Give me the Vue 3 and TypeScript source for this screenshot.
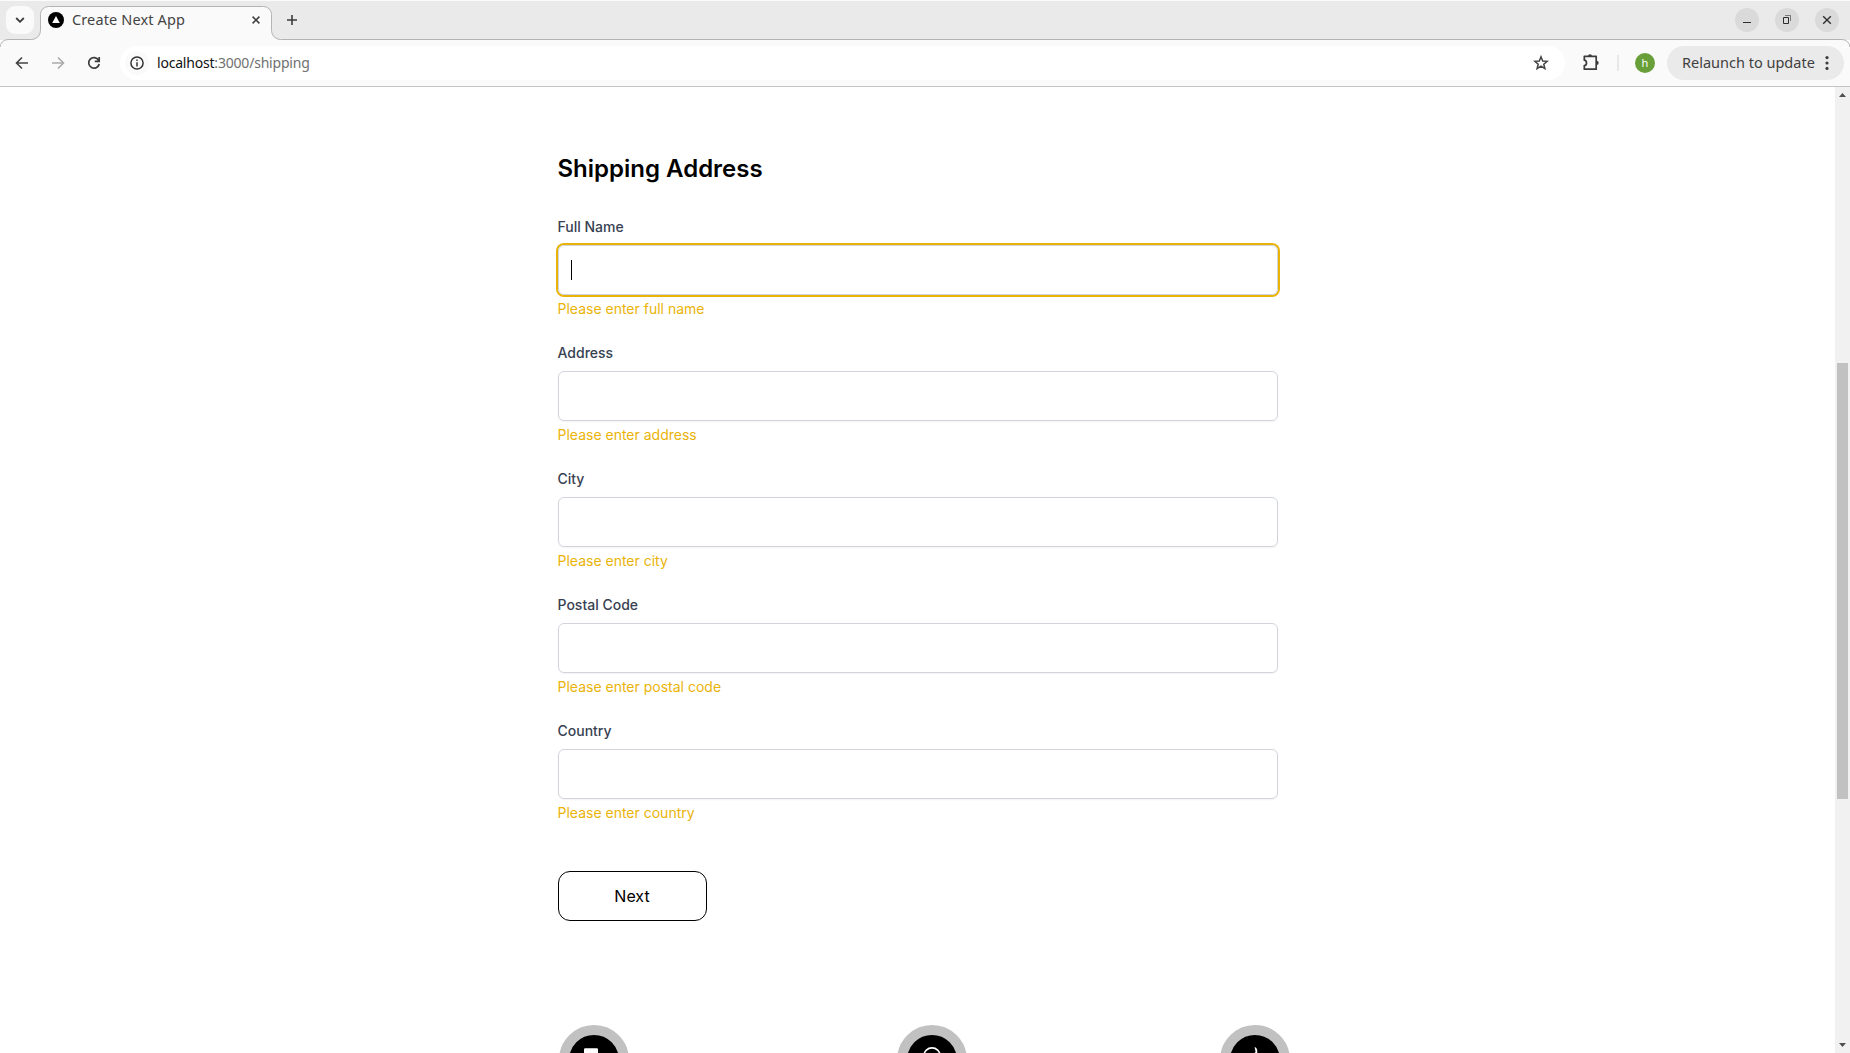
<script setup lang="ts">
interface Field {
  id: string
  label: string
  error: string
  focused?: boolean
}

const fields: Field[] = [
  { id: 'fullName', label: 'Full Name', error: 'Please enter full name', focused: true },
  { id: 'address', label: 'Address', error: 'Please enter address' },
  { id: 'city', label: 'City', error: 'Please enter city' },
  { id: 'postalCode', label: 'Postal Code', error: 'Please enter postal code' },
  { id: 'country', label: 'Country', error: 'Please enter country' },
]
</script>

<template>
  <div class="window">
    <header class="tabstrip">
      <svg class="tab-shape" width="1850" height="47" viewBox="0 0 1850 47">
        <path
          d="M0 47.5A8 8 0 0 1 8 39.5H31.5A9 9 0 0 0 40.5 30.5V14.5A8 8 0 0 1 48.5 6.5H263.5A8 8 0 0 1 271.5 14.5V30.5A9 9 0 0 0 280.5 39.5H1842A8 8 0 0 1 1850 47.5Z"
          fill="#fafafa"
        />
        <path
          d="M0 47.5A8 8 0 0 1 8 39.5H31.5A9 9 0 0 0 40.5 30.5V14.5A8 8 0 0 1 48.5 6.5H263.5A8 8 0 0 1 271.5 14.5V30.5A9 9 0 0 0 280.5 39.5H1842A8 8 0 0 1 1850 47.5"
          fill="none"
          stroke="#b4b4b4"
        />
      </svg>
      <button class="tab-search" aria-label="Search tabs">
        <svg width="10" height="6" viewBox="0 0 10 6"><path d="M1.2 1L5 4.8L8.8 1" fill="none" stroke="#3c3c3c" stroke-width="1.8" /></svg>
      </button>
      <div class="tab">
        <svg width="16" height="16" viewBox="0 0 16 16"><circle cx="8" cy="8" r="8" /><path d="M8 4L11.8 11H4.2Z" fill="#fff" /></svg>
        <span class="tab-title">Create Next App</span>
        <svg class="tab-close" width="8" height="8" viewBox="0 0 8 8"><path d="M.6 .6L7.4 7.4M7.4 .6L.6 7.4" stroke="#3c3c3c" stroke-width="1.5" /></svg>
      </div>
      <svg class="new-tab" width="10" height="10" viewBox="0 0 10 10"><path d="M5 0V10M0 5H10" stroke="#3c3c3c" stroke-width="1.6" /></svg>
      <div class="window-buttons">
        <span><svg width="24" height="24" viewBox="0 0 24 24"><path d="M8 14.5H16" stroke="#2e2e2e" /></svg></span>
        <span><svg width="24" height="24" viewBox="0 0 24 24" fill="none"><path d="M8.5 9.5H13.5V15.5H8.5Z" stroke="#2e2e2e" /><path d="M10 7.5H15.5V13" stroke="#2e2e2e" stroke-opacity=".55" /></svg></span>
        <span><svg width="24" height="24" viewBox="0 0 24 24"><path d="M8.2 8.2L15.8 15.8M15.8 8.2L8.2 15.8" stroke="#2e2e2e" stroke-width="1.4" /></svg></span>
      </div>
    </header>

    <nav class="toolbar">
      <svg class="nav-icon" width="16" height="16" viewBox="0 0 16 16"><path d="M14 8H3M8 2.5L2.5 8L8 13.5" fill="none" stroke="#444" stroke-width="1.6" /></svg>
      <svg class="nav-icon" width="16" height="16" viewBox="0 0 16 16"><path d="M2 8H13M8 2.5L13.5 8L8 13.5" fill="none" stroke="#aaa" stroke-width="1.6" /></svg>
      <svg class="nav-icon" width="16" height="16" viewBox="0 0 16 16"><path d="M12.6 5.2A5.3 5.3 0 1 0 13.2 9M13.2 2V6.3H8.8" fill="none" stroke="#3c3c3c" stroke-width="1.7" /></svg>
      <div class="omnibox">
        <span class="site-info">
          <svg width="14" height="14" viewBox="0 0 14 14"><circle cx="7" cy="7" r="6.1" fill="none" stroke="#333" stroke-width="1.5" /><path d="M7 6.2V10.4M7 3.6V5.1" stroke="#333" stroke-width="1.5" /></svg>
        </span>
        <span class="url"><b>localhost</b>:3000/shipping</span>
        <svg class="star" width="16" height="16" viewBox="0 0 16 16"><path d="M8 1.8L9.7 6L14.2 6.3L10.8 9.2L11.9 13.7L8 11.2L4.1 13.7L5.2 9.2L1.8 6.3L6.3 6Z" fill="none" stroke="#444" stroke-width="1.5" /></svg>
      </div>
      <svg class="puzzle" width="18" height="18" viewBox="0 0 18 18"><path d="M2.3 2.3H14.2V15.2H2.3V11.6C5.2 11.2 5.2 6.6 2.3 6.2Z" fill="none" stroke="#3c3c3c" stroke-width="1.7" stroke-linejoin="round" /><path d="M6 2.2A2 2 0 0 1 10 2.2ZM14.6 6.8A2.1 2.1 0 0 1 14.6 11Z" fill="#3c3c3c" /></svg>
      <span class="divider"></span>
      <span class="avatar">h</span>
      <button class="relaunch">
        <span>Relaunch to update</span>
        <svg width="4" height="16" viewBox="0 0 4 16" fill="#3c3c3c"><circle cx="2" cy="2.6" r="1.6" /><circle cx="2" cy="8" r="1.6" /><circle cx="2" cy="13.4" r="1.6" /></svg>
      </button>
    </nav>

    <div class="viewport">
      <main class="page">
        <form class="shipping" @submit.prevent>
          <h1>Shipping Address</h1>
          <div v-for="field in fields" :key="field.id" class="field">
            <label :for="field.id">{{ field.label }}</label>
            <div :id="field.id" class="input" :class="{ focused: field.focused }">
              <span v-if="field.focused" class="caret"></span>
            </div>
            <p class="error">{{ field.error }}</p>
          </div>
          <button class="next" type="submit">Next</button>
        </form>
        <section class="features">
          <span class="badge">
            <svg width="32" height="32" viewBox="0 0 32 32" fill="none" stroke="#fff" stroke-width="2"><path d="M6 5.5A1.2 1.2 0 0 1 7.2 4.3H18.8A1.2 1.2 0 0 1 20 5.5V23H6Z" fill="#fff" stroke="none" /><path d="M20 11H26L29 16V23H20" /></svg>
          </span>
          <span class="badge">
            <svg width="32" height="32" viewBox="0 0 32 32" fill="none" stroke="#fff" stroke-width="2"><path d="M6 18V12.5A10 9.5 0 0 1 26 12.5V18" transform="translate(3.2 1.5) scale(.8)" /><path d="M6 16H10V23H6ZM22 16H26V23H22Z" /></svg>
          </span>
          <span class="badge">
            <svg width="32" height="32" viewBox="0 0 32 32"><path d="M15.6 3.2C17.2 3 18.4 4.7 18.3 8L17.8 12H25V26H10V14L16.6 8Z" fill="#fff" /></svg>
          </span>
        </section>
      </main>
      <aside class="scrollbar">
        <svg width="7" height="4" viewBox="0 0 7 4"><path d="M3.5 0L7 4H0Z" fill="#505050" /></svg>
        <span class="thumb"></span>
        <svg width="7" height="4" viewBox="0 0 7 4"><path d="M0 0H7L3.5 4Z" fill="#505050" /></svg>
      </aside>
    </div>
  </div>
</template>

<style>
body {
  margin: 0;
  overflow: hidden;
}
</style>

<style scoped>
* {
  box-sizing: border-box;
}
svg {
  display: block;
  flex: none;
}
button {
  border: 0;
  padding: 0;
  font: inherit;
  color: inherit;
}
.window {
  width: 1850px;
  height: 1053px;
  display: flex;
  flex-direction: column;
  overflow: hidden;
  background: #fff;
  font-family: "Noto Sans", "Open Sans", sans-serif;
}
.tabstrip {
  position: relative;
  flex: none;
  height: 40px;
  display: flex;
  align-items: center;
  padding: 0 11px 0 6px;
  background: #eaeaea;
  box-shadow: inset 0 1px #fbfbfb;
}
.tab-shape {
  position: absolute;
  left: 0;
  top: 0;
}
.tab-search,
.tab,
.new-tab,
.window-buttons {
  position: relative;
}
.tab-search {
  width: 28px;
  height: 28px;
  border-radius: 9px;
  background: #fafafa;
  display: flex;
  align-items: center;
  justify-content: center;
}
.tab {
  width: 238px;
  display: flex;
  align-items: center;
  padding: 0 12px 0 14px;
}
.tab-title {
  margin-left: 8px;
  padding-bottom: 2px;
  font-size: 14.5px;
  letter-spacing: 0.13px;
  line-height: 20px;
  color: #444;
  white-space: nowrap;
}
.tab-close {
  margin-left: auto;
}
.new-tab {
  margin-left: 15px;
}
.window-buttons {
  margin-left: auto;
  display: flex;
  gap: 16px;
}
.window-buttons span {
  width: 24px;
  height: 24px;
  border-radius: 50%;
  background: #dadada;
}
.toolbar {
  position: relative;
  flex: none;
  height: 47px;
  display: flex;
  align-items: center;
  padding: 0 6px 0 14px;
  background:
    linear-gradient(#fafafa, #fafafa) 8px 0 / 1834px 100% no-repeat,
    linear-gradient(#fafafa, #fafafa) 0 8px / 100% 100% no-repeat;
  border-bottom: 1px solid #c4c4c4;
}
.nav-icon {
  margin-right: 20px;
}
.nav-icon:nth-child(3) {
  margin-right: 18px;
}
.omnibox {
  width: 1445px;
  height: 34px;
  border-radius: 17px;
  background: #fff;
  display: flex;
  align-items: center;
  padding: 0 16px 0 5px;
}
.site-info {
  width: 24px;
  height: 24px;
  border-radius: 50%;
  background: #fafafa;
  display: flex;
  align-items: center;
  justify-content: center;
}
.url {
  margin-left: 8px;
  font-size: 14px;
  letter-spacing: -0.2px;
  line-height: 20px;
  color: #707070;
}
.url b {
  font-weight: 400;
  color: #111;
}
.star {
  margin-left: auto;
}
.puzzle {
  margin-left: 17px;
}
.divider {
  width: 2px;
  height: 16px;
  margin-left: 17px;
  background: #e8e8e8;
}
.avatar {
  width: 20px;
  height: 20px;
  margin-left: 16px;
  border-radius: 50%;
  background: #689f38;
  color: #fff;
  font-size: 11px;
  line-height: 20px;
  text-align: center;
}
.relaunch {
  width: 177px;
  height: 34px;
  margin-left: 12px;
  border-radius: 17px;
  background: #eaeaea;
  color: #3f3f3f;
  display: flex;
  align-items: center;
  justify-content: space-between;
  padding: 0 15px;
  font-size: 14.5px;
  white-space: nowrap;
}
.relaunch span {
  padding-bottom: 2px;
}
.viewport {
  flex: 1;
  min-height: 0;
  display: flex;
}
.page {
  flex: 1;
  min-width: 0;
  overflow: hidden;
  font-family: Inter, sans-serif;
  color: #000;
}
.shipping {
  width: 720px;
  margin: 0 auto;
  padding-top: 66px;
}
h1 {
  margin: 0 0 32px;
  font-size: 24px;
  font-weight: 600;
  line-height: 32px;
}
.field {
  margin-bottom: 24px;
}
label {
  display: block;
  margin-bottom: 8px;
  font-size: 14px;
  font-weight: 500;
  line-height: 20px;
  color: #374151;
}
.input {
  height: 50px;
  padding: 14px 12px;
  border: 1px solid #d1d5db;
  border-radius: 6px;
  box-shadow: 0 1px 2px rgba(0, 0, 0, 0.05);
}
.input.focused {
  box-shadow: 0 0 0 2px #eab308;
}
.caret {
  display: block;
  width: 1px;
  height: 20px;
  background: #000;
}
.error {
  margin: 4px 0 0;
  font-size: 14px;
  line-height: 20px;
  color: #eab308;
}
.next {
  display: block;
  width: 149px;
  height: 50px;
  margin-top: 48px;
  border: 1px solid #000;
  border-radius: 12px;
  background: #fff;
  font-size: 16px;
  line-height: 24px;
}
.features {
  width: 731px;
  margin: 104px 0 0 559px;
  display: flex;
}
.badge {
  flex: none;
  width: 70px;
  height: 70px;
  border: 10px solid #c1c1c1;
  border-radius: 50%;
  background: #000;
  display: flex;
  align-items: center;
  justify-content: center;
}
.badge:nth-child(2) {
  margin-left: 268px;
}
.badge:nth-child(3) {
  margin-left: 253px;
}
.scrollbar {
  width: 15px;
  display: flex;
  flex-direction: column;
  align-items: center;
  justify-content: space-between;
  padding: 6px 0;
  background: #f1f1f1;
}
.thumb {
  width: 11px;
  height: 436px;
  margin-bottom: -22px;
  background: #c1c1c1;
}
</style>
